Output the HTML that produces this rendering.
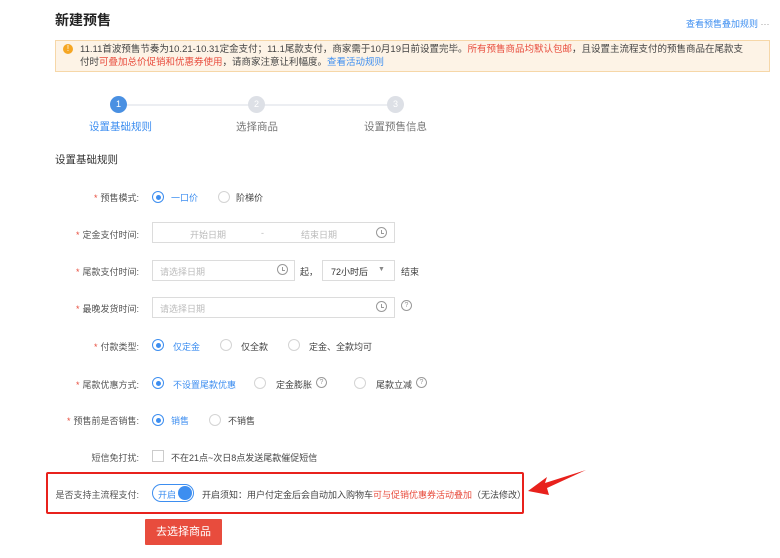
<!DOCTYPE html><html><head><meta charset="utf-8"><style>
body{margin:0;width:780px;height:558px;background:#fff;font-family:"Liberation Sans","Noto Sans CJK SC",sans-serif;font-size:9px;color:#444;position:relative;overflow:hidden}
.a{position:absolute;white-space:nowrap}
.lab{position:absolute;right:641px;white-space:nowrap;color:#555}
.lab i{color:#e84c3d;font-style:normal;margin-right:3px}
.r{position:absolute;width:10px;height:10px;border:1px solid #d4d4d4;border-radius:50%;background:#fff}
.r.on{border-color:#3d8ef0}
.r.on:after{content:"";position:absolute;left:2.5px;top:2.5px;width:5px;height:5px;border-radius:50%;background:#3d8ef0}
.blue{color:#3d8ef0}.red{color:#e84c3d}
.inp{position:absolute;border:1px solid #dcdcdc;height:20px;box-sizing:border-box;color:#bbb}
.clk{position:absolute;width:9px;height:9px;border:1px solid #999;border-radius:50%}
.clk:after{content:"";position:absolute;left:4px;top:1.5px;width:2px;height:3px;border-left:1px solid #999;border-bottom:1px solid #999}
.q{position:absolute;width:9px;height:9px;border:1px solid #999;border-radius:50%;font-size:7px;line-height:9px;text-align:center;color:#999}
.step{position:absolute;width:17px;height:17px;border-radius:50%;background:#dde0e6;color:#fff;font-size:9px;line-height:17px;text-align:center}
</style></head><body>
<div class="a" style="left:55px;top:10px;font-size:14px;font-weight:bold;color:#222">新建预售</div>
<div class="a blue" style="left:686px;top:17px;font-size:9px">查看预售叠加规则 <span style="color:#999">···</span></div>
<div class="a" style="left:55px;top:40px;width:715px;height:32px;background:#fdf3e6;border:1px solid #f6d7a8;box-sizing:border-box"></div>
<div class="a" style="left:63px;top:44px;width:10px;height:10px;border-radius:50%;background:#f5a623;color:#fff;font-size:8px;line-height:10px;text-align:center">!</div>
<div class="a" style="left:80px;top:43px;font-size:9.5px;line-height:13px;color:#444">11.11首波预售节奏为10.21-10.31定金支付；11.1尾款支付，商家需于10月19日前设置完毕。<span class="red">所有预售商品均默认包邮</span>，且设置主流程支付的预售商品在尾款支<br>付时<span class="red">可叠加总价促销和优惠券使用</span>，请商家注意让利幅度。<span class="blue">查看活动规则</span></div>
<div class="a" style="left:127px;top:104px;width:262px;height:2px;background:#eceef2"></div>
<div class="step" style="left:110px;top:96px;background:#4a90e2">1</div>
<div class="step" style="left:248px;top:96px">2</div>
<div class="step" style="left:387px;top:96px">3</div>
<div class="a blue" style="left:89px;top:119px;font-size:10.5px">设置基础规则</div>
<div class="a" style="left:236px;top:119px;font-size:10.5px;color:#777">选择商品</div>
<div class="a" style="left:364px;top:119px;font-size:10.5px;color:#777">设置预售信息</div>
<div class="a" style="left:55px;top:152px;font-size:10.5px;color:#333">设置基础规则</div>

<div class="lab" style="top:191px"><i>*</i>预售模式:</div>
<div class="r on" style="left:152px;top:191px"></div><div class="a blue" style="left:171px;top:191px">一口价</div>
<div class="r" style="left:218px;top:191px"></div><div class="a" style="left:236px;top:191px">阶梯价</div>

<div class="lab" style="top:228px"><i>*</i>定金支付时间:</div>
<div class="inp" style="left:152px;top:222px;width:243px;height:21px"></div>
<div class="a" style="left:190px;top:228px;color:#bbb">开始日期</div><div class="a" style="left:261px;top:228px;color:#bbb">-</div><div class="a" style="left:301px;top:228px;color:#bbb">结束日期</div>
<div class="clk" style="left:376px;top:227px"></div>

<div class="lab" style="top:265px"><i>*</i>尾款支付时间:</div>
<div class="inp" style="left:152px;top:260px;width:143px;height:21px"></div>
<div class="a" style="left:160px;top:265px;color:#bbb">请选择日期</div><div class="clk" style="left:277px;top:264px"></div>
<div class="a" style="left:300px;top:265px">起，</div>
<div class="inp" style="left:322px;top:260px;width:73px;height:21px"></div>
<div class="a" style="left:331px;top:265px;color:#333">72小时后</div><div class="a" style="left:378px;top:266px;font-size:7px;color:#888">▼</div>
<div class="a" style="left:401px;top:265px">结束</div>

<div class="lab" style="top:302px"><i>*</i>最晚发货时间:</div>
<div class="inp" style="left:152px;top:297px;width:243px;height:21px"></div>
<div class="a" style="left:160px;top:302px;color:#bbb">请选择日期</div><div class="clk" style="left:376px;top:301px"></div>
<div class="q" style="left:401px;top:300px">?</div>

<div class="lab" style="top:340px"><i>*</i>付款类型:</div>
<div class="r on" style="left:152px;top:339px"></div><div class="a blue" style="left:173px;top:340px">仅定金</div>
<div class="r" style="left:220px;top:339px"></div><div class="a" style="left:241px;top:340px">仅全款</div>
<div class="r" style="left:288px;top:339px"></div><div class="a" style="left:309px;top:340px">定金、全款均可</div>

<div class="lab" style="top:378px"><i>*</i>尾款优惠方式:</div>
<div class="r on" style="left:152px;top:377px"></div><div class="a blue" style="left:173px;top:378px">不设置尾款优惠</div>
<div class="r" style="left:254px;top:377px"></div><div class="a" style="left:276px;top:378px">定金膨胀</div><div class="q" style="left:316px;top:377px">?</div>
<div class="r" style="left:354px;top:377px"></div><div class="a" style="left:376px;top:378px">尾款立减</div><div class="q" style="left:416px;top:377px">?</div>

<div class="lab" style="top:414px"><i>*</i>预售前是否销售:</div>
<div class="r on" style="left:152px;top:414px"></div><div class="a blue" style="left:171px;top:414px">销售</div>
<div class="r" style="left:209px;top:414px"></div><div class="a" style="left:228px;top:414px">不销售</div>

<div class="lab" style="top:451px">短信免打扰:</div>
<div class="a" style="left:152px;top:450px;width:10px;height:10px;border:1px solid #ccc"></div>
<div class="a" style="left:171px;top:451px">不在21点~次日8点发送尾款催促短信</div>

<div class="a" style="left:46px;top:472px;width:478px;height:42px;border:2px solid #e8211c;border-radius:2px;box-sizing:border-box"></div>
<div class="lab" style="top:488px">是否支持主流程支付:</div>
<div class="a" style="left:152px;top:484px;width:42px;height:18px;border:1px solid #3d8ef0;border-radius:10px;box-sizing:border-box"></div>
<div class="a blue" style="left:158px;top:488px">开启</div>
<div class="a" style="left:178px;top:486px;width:14px;height:14px;border-radius:50%;background:#3d8ef0"></div>
<div class="a" style="left:202px;top:488px">开启须知：用户付定金后会自动加入购物车<span class="red">可与促销优惠券活动叠加</span>（无法修改）</div>
<svg class="a" style="left:525px;top:465px" width="65" height="35"><path d="M3 26 L22 12 L20 18 L61 5 L22 23 L24 30 Z" fill="#e8211c"/></svg>

<div class="a" style="left:145px;top:519px;width:77px;height:26px;background:#e84c3d;color:#fff;font-size:11px;line-height:26px;text-align:center;border-radius:1px">去选择商品</div>
</body></html>
